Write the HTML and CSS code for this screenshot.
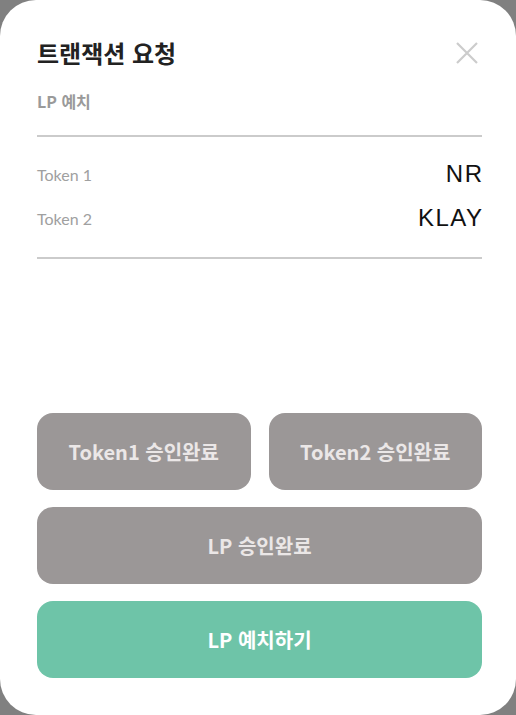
FILE: index.html
```html
<!DOCTYPE html>
<html lang="ko">
<head>
<meta charset="utf-8">
<link rel="stylesheet" href="styles.css">
</head>
<body>
<div class="modal">
  <div class="header">
    <h1 class="title">트랜잭션 요청</h1>
    <button class="close" aria-label="닫기">
      <svg width="22" height="22" viewBox="0 0 22 22"><path d="M1 1 L21 21 M21 1 L1 21" stroke="#cccccc" stroke-width="2.2" fill="none"/></svg>
    </button>
  </div>
  <div class="subtitle">LP 예치</div>
  <div class="divider"></div>
  <div class="tokens">
    <div class="token-row"><span class="token-label">Token 1</span><span class="token-value">NR</span></div>
    <div class="token-row"><span class="token-label">Token 2</span><span class="token-value">KLAY</span></div>
  </div>
  <div class="divider"></div>
  <div class="actions">
    <div class="btn-pair">
      <button class="btn btn-done">Token1 승인완료</button>
      <button class="btn btn-done">Token2 승인완료</button>
    </div>
    <button class="btn btn-done">LP 승인완료</button>
    <button class="btn btn-primary">LP 예치하기</button>
  </div>
</div>
</body>
</html>
```
FILE: styles.css
```css
* { box-sizing: border-box; }
html, body { margin: 0; padding: 0; }
body {
  background: #808080;
  width: 516px;
  height: 715px;
  overflow: hidden;
  font-family: "Noto Sans CJK KR", "Noto Sans", sans-serif;
}
.modal {
  width: 516px;
  height: 715px;
  background: #ffffff;
  border-radius: 36px;
  padding: 36px 34px 37px 37px;
  display: flex;
  flex-direction: column;
}
.header {
  display: flex;
  justify-content: space-between;
  align-items: center;
  height: 34px;
}
.title {
  margin: 0;
  font-size: 24px;
  font-weight: 700;
  color: #222222;
  line-height: 34px;
  letter-spacing: 0;
}
.close {
  border: 0;
  background: none;
  padding: 0;
  margin-right: 4px;
  width: 22px;
  height: 22px;
  display: flex;
}
.subtitle {
  margin-top: 20px;
  font-size: 16px;
  font-weight: 700;
  color: #9a9a9a;
  line-height: 22px;
}
.divider {
  height: 2px;
  background: #cbcbcb;
  margin-top: 23px;
}
.tokens {
  display: flex;
  flex-direction: column;
  gap: 14px;
  padding: 22px 0 24px;
}
.tokens + .divider { margin-top: 0; }
.token-row {
  display: flex;
  justify-content: space-between;
  align-items: center;
  height: 30px;
}
.token-label {
  font-family: Lato, "Noto Sans", sans-serif;
  font-size: 16px;
  color: #a0a0a0;
}
.token-value {
  font-family: "Liberation Sans", Arial, sans-serif;
  font-size: 24px;
  letter-spacing: 1.5px;
  margin-right: -1.5px;
  color: #111111;
}
.actions {
  margin-top: auto;
  display: flex;
  flex-direction: column;
  gap: 17px;
}
.btn-pair {
  display: grid;
  grid-template-columns: 1fr 1fr;
  gap: 18px;
}
.btn {
  height: 77px;
  border: 0;
  border-radius: 16px;
  font-family: "Noto Sans CJK KR", "Noto Sans", sans-serif;
  font-size: 20px;
  font-weight: 700;
  letter-spacing: 0;
}
.btn-done {
  background: #9b9797;
  color: #ebe7e7;
}
.btn-primary {
  background: #6ec4a8;
  color: #ffffff;
}
```
